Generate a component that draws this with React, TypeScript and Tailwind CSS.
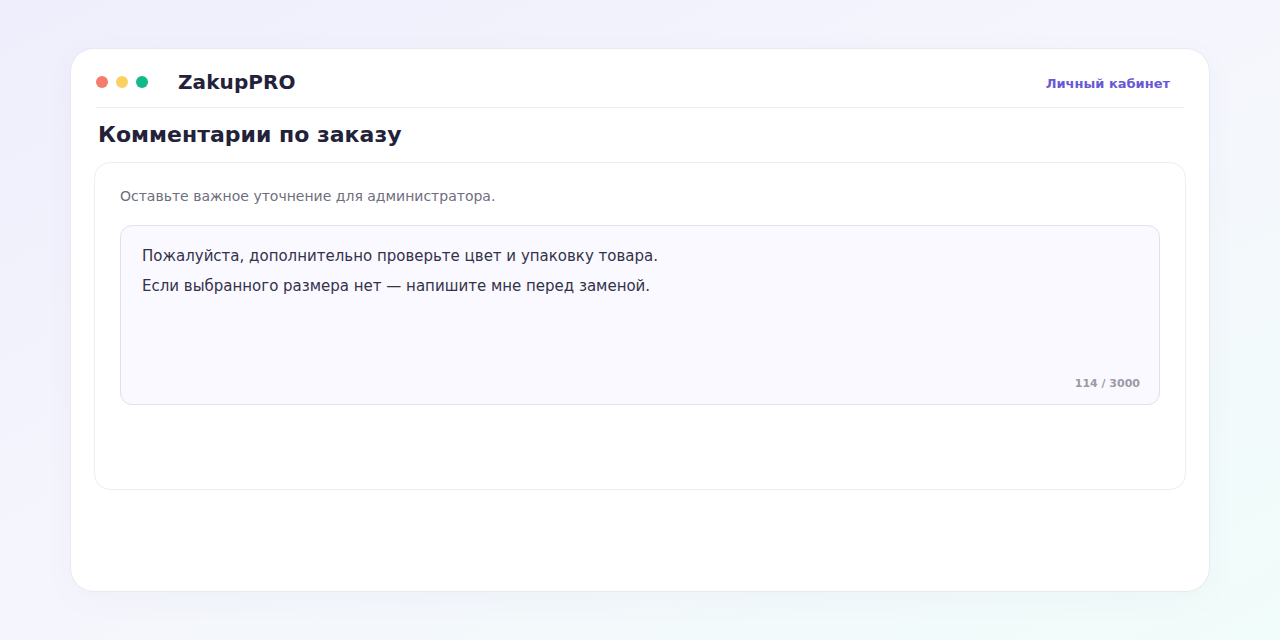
export default function App() {
  return (
    <div
      className="w-[1280px] h-[640px] overflow-hidden bg-gradient-to-br from-[#efeefc] via-[#f5f6fd] to-[#f1fdfa] pt-[48px] px-[70px]"
      style={{ fontFamily: '"DejaVu Sans", Verdana, sans-serif' }}
    >
      <div className="h-[544px] rounded-[24px] bg-white border border-[#e9e9f1] px-[25px] pt-[19px] shadow-[0_8px_30px_rgba(90,80,160,0.04)]">
        <div className="flex items-center h-[28px]">
          <div className="flex items-center gap-[8px]">
            <span className="w-[12px] h-[12px] rounded-full bg-[#f47c6c]" />
            <span className="w-[12px] h-[12px] rounded-full bg-[#fbd062]" />
            <span className="w-[12px] h-[12px] rounded-full bg-[#13b98a]" />
          </div>
          <div className="ml-[30px] text-[20px] font-bold text-[#24223a] tracking-[0.1px]">ZakupPRO</div>
          <div className="ml-auto mr-[14px] mt-[3px] text-[13px] font-bold text-[#6a58d4]">Личный кабинет</div>
        </div>
        <div className="mt-[11px] h-px bg-[#ededf3]" />
        <h1 className="mt-[13px] ml-[2px] text-[22px] leading-[28px] font-bold text-[#24223a]">Комментарии по заказу</h1>
        <div className="mt-[13px] -ml-[2px] -mr-[2px] h-[328px] rounded-[16px] border border-[#ececf2] bg-white px-[25px] pt-[23px]">
          <p className="text-[14px] leading-[20px] text-[#6e6e7e]">Оставьте важное уточнение для администратора.</p>
          <div className="relative mt-[19px] h-[180px] rounded-[12px] border border-[#e1e1ec] bg-[#faf9ff] px-[21px] pt-[15px]">
            <p className="text-[15px] leading-[30px] text-[#33324a]">Пожалуйста, дополнительно проверьте цвет и упаковку товара.</p>
            <p className="text-[15px] leading-[30px] text-[#33324a]">Если выбранного размера нет — напишите мне перед заменой.</p>
            <span className="absolute right-[19px] bottom-[12px] text-[11px] font-bold text-[#9b9aa8]">114 / 3000</span>
          </div>
        </div>
      </div>
    </div>
  );
}
